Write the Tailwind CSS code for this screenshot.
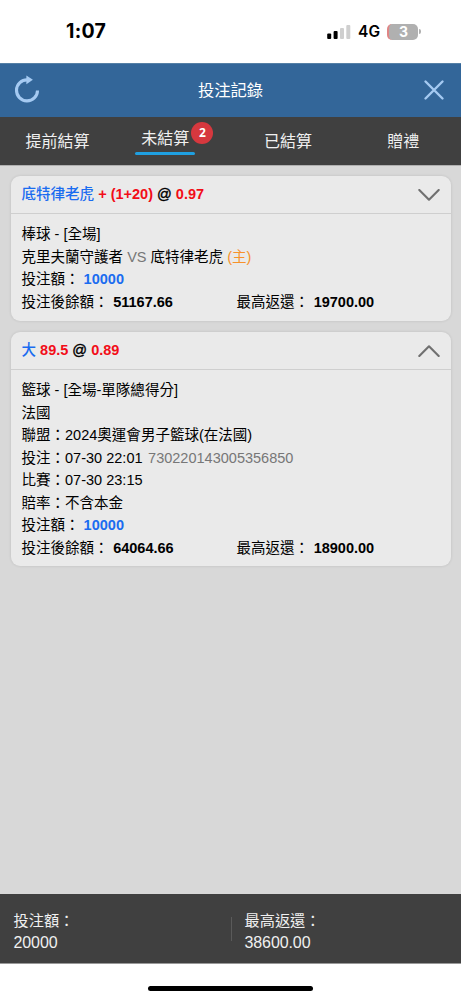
<!DOCTYPE html>
<html lang="zh-Hant">
<head>
    <meta charset="UTF-8">
    <meta name="viewport" content="width=device-width, initial-scale=1.0">
    <title>投注記錄</title>
    <script src="https://cdn.jsdelivr.net/npm/@tailwindcss/browser@4"></script>
</head>
<body class="flex h-[1000px] flex-col overflow-hidden bg-white font-['Liberation_Sans','Noto_Sans_CJK_TC',sans-serif]">

<!-- 狀態列 -->
<div class="flex h-[63px] shrink-0 items-center justify-between pl-[66px] pr-[40px] font-[Inter,sans-serif] text-black">
    <span class="pt-px text-[19.5px] leading-none font-bold tracking-[0.3px]">1:07</span>
    <div class="flex items-center">
        <svg class="h-4 w-6" viewBox="0 0 24 16">
            <rect x="0.2" y="9.5" width="4" height="5.5" rx="1"/>
            <rect x="6.6" y="7" width="4" height="8" rx="1"/>
            <rect x="13" y="4" width="4" height="11" rx="1" fill="#cfcfcf"/>
            <rect x="19.3" y="1" width="4" height="14" rx="1" fill="#cfcfcf"/>
        </svg>
        <span class="ml-[7px] pt-px text-[15.5px] leading-none font-semibold">4G</span>
        <div class="ml-[7px] flex items-center">
            <div class="flex h-4 w-[31px] items-center justify-center overflow-hidden rounded-[5px] border-l-2 border-[#e08585] bg-[#b0b0b0] text-[14px] font-bold text-white">3</div>
            <div class="ml-px h-[5px] w-[2px] rounded-r-full bg-[#b0b0b0]"></div>
        </div>
    </div>
</div>

<!-- 標題列 -->
<header class="flex h-[54px] shrink-0 items-center justify-between border-t border-[#5580a6] bg-[#336699] pl-[14px] pr-[16px]">
    <svg class="-mt-[3px] h-7 w-[26px]" viewBox="0 0 26 28" fill="none">
        <path d="M13.5 4.9a10.5 10.5 0 1 0 10 10.5" stroke="#a5caf2" stroke-width="3.1"/>
        <path d="M12.4 0.4l6.5 4.4-6.5 4.4z" fill="#a5caf2"/>
    </svg>
    <h1 class="-ml-[2px] text-[16.3px] text-white">投注記錄</h1>
    <svg class="-mt-px h-[22px] w-[22px]" viewBox="0 0 22 22" fill="none" stroke="#a5caf2" stroke-width="2.4" stroke-linecap="round">
        <path d="M2.5 2.5l17 17M19.5 2.5l-17 17"/>
    </svg>
</header>

<!-- 標籤頁 -->
<nav class="grid h-[48px] shrink-0 grid-cols-4 bg-[#404040] text-[16px] text-[#f0f0f0]">
    <div class="flex items-center justify-center pt-[2px]">提前結算</div>
    <div class="flex flex-col items-center pt-[9px]">
        <div class="relative -ml-[15px] px-[6px]">
            <span class="block leading-[26px]">未結算</span>
            <div class="-mx-[6px] h-[3px] rounded-full bg-[#1f9fe0]"></div>
            <span class="absolute -right-[18px] -top-[4px] flex size-[22px] items-center justify-center rounded-full bg-[#d6383e] font-['Noto_Sans',sans-serif] text-[12px] font-bold text-white">2</span>
        </div>
    </div>
    <div class="flex items-center justify-center pt-[2px]">已結算</div>
    <div class="flex items-center justify-center pt-[2px]">贈禮</div>
</nav>

<!-- 注單列表 -->
<main class="flex flex-1 flex-col gap-[11px] border-t border-[#b0b0b0] bg-[#d8d8d8] px-[10.5px] pt-[10px] text-[14.53px] leading-[22.5px] text-black">
    <section class="rounded-[9px] bg-[#eaeaea] shadow-[0_0_3px_rgba(0,0,0,0.12)]">
        <div class="flex h-[38px] items-center justify-between border-b border-[#cfcfcf] px-[11px]">
            <p class="font-bold text-[#f20d18]"><span class="font-medium text-[#1a6cf0]">底特律老虎</span> + (1+20) <span class="font-normal text-black [-webkit-text-stroke:0.4px_black]">@</span> 0.97</p>
            <svg class="h-3 w-[22px]" viewBox="0 0 22 12" fill="none" stroke="#707070" stroke-width="2.1" stroke-linecap="round" stroke-linejoin="round">
                <path d="M1.3 1l9.7 9.7L20.7 1"/>
            </svg>
        </div>
        <div class="px-[11px] pt-[9px] pb-[8px]">
            <p>棒球 - [全場]</p>
            <p>克里夫蘭守護者 <span class="text-[#777]">VS</span> 底特律老虎 <span class="text-[#f7922a]">(主)</span></p>
            <p>投注額： <b class="text-[#1a6cf0]">10000</b></p>
            <div class="grid grid-cols-[215px_1fr]">
                <p>投注後餘額： <b class="ml-[0.5px]">51167.66</b></p>
                <p>最高返還： <b class="ml-[0.5px]">19700.00</b></p>
            </div>
        </div>
    </section>

    <section class="rounded-[9px] bg-[#eaeaea] shadow-[0_0_3px_rgba(0,0,0,0.12)]">
        <div class="flex h-[38px] items-center justify-between border-b border-[#cfcfcf] px-[11px]">
            <p class="font-bold text-[#f20d18]"><span class="font-medium text-[#1a6cf0]">大</span> 89.5 <span class="font-normal text-black [-webkit-text-stroke:0.4px_black]">@</span> 0.89</p>
            <svg class="h-3 w-[22px]" viewBox="0 0 22 12" fill="none" stroke="#707070" stroke-width="2.1" stroke-linecap="round" stroke-linejoin="round">
                <path d="M1.3 11L11 1.3l9.7 9.7"/>
            </svg>
        </div>
        <div class="px-[11px] pt-[9px] pb-[7px]">
            <p>籃球 - [全場-單隊總得分]</p>
            <p>法國</p>
            <p>聯盟：2024奧運會男子籃球(在法國)</p>
            <p>投注：07-30 22:01 <span class="ml-[1.5px] text-[#777]">730220143005356850</span></p>
            <p>比賽：07-30 23:15</p>
            <p>賠率：不含本金</p>
            <p>投注額： <b class="text-[#1a6cf0]">10000</b></p>
            <div class="grid grid-cols-[215px_1fr]">
                <p>投注後餘額： <b class="ml-[0.5px]">64064.66</b></p>
                <p>最高返還： <b class="ml-[0.5px]">18900.00</b></p>
            </div>
        </div>
    </section>
</main>

<!-- 合計 -->
<footer class="grid h-[70px] shrink-0 grid-cols-2 items-center border-b border-[#999] bg-[#404040] text-[15.2px] leading-[22px] text-[#f0f0f0]">
    <div class="pt-[6px] pl-[13.5px]">
        <p>投注額：</p>
        <p class="text-[16px] tracking-[-0.1px]">20000</p>
    </div>
    <div class="flex items-center">
        <div class="h-6 w-px bg-[#5a5a5a]"></div>
        <div class="pt-[6px] pl-[13px]">
            <p>最高返還：</p>
            <p class="text-[16px] tracking-[-0.1px]">38600.00</p>
        </div>
    </div>
</footer>

<div class="flex h-[36px] shrink-0 items-end justify-center bg-white pb-[9px]">
    <div class="h-[5px] w-[165px] rounded-full bg-black"></div>
</div>

</body>
</html>
